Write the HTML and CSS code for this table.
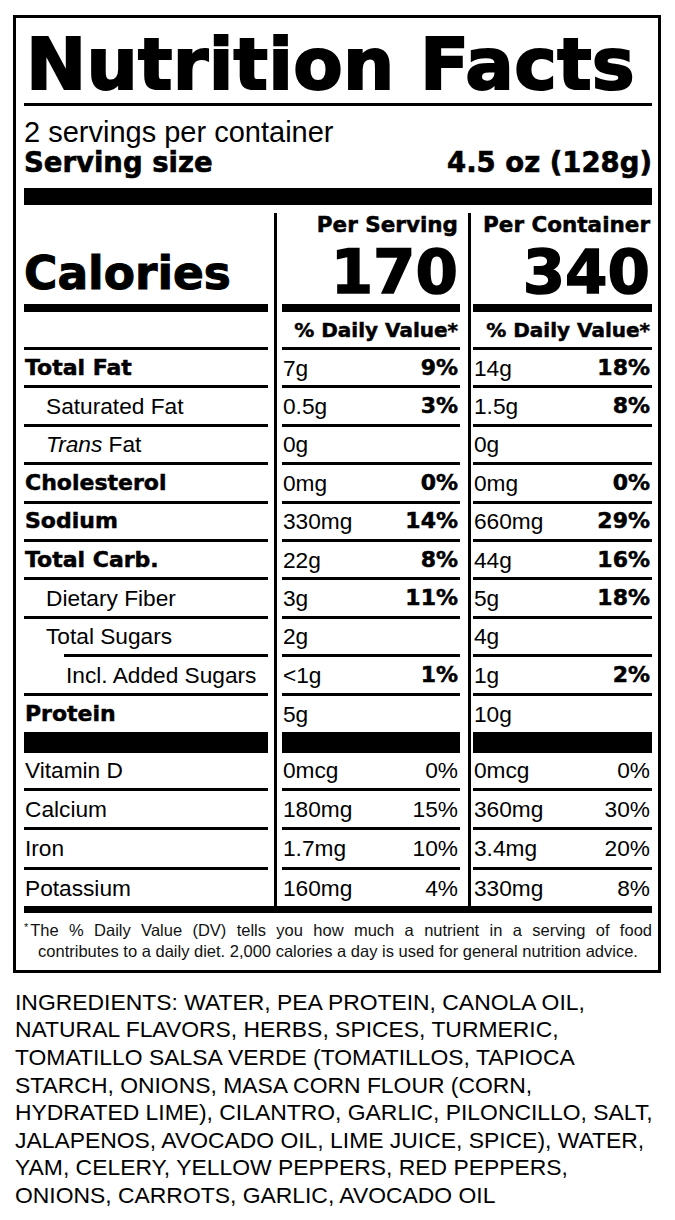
FILE: index.html
```html
<!DOCTYPE html>
<html lang="en">
<head>
<meta charset="utf-8">
<title>Nutrition Facts</title>
<link rel="stylesheet" href="styles.css">
</head>
<body>
<section class="label">
  <h1 class="title">Nutrition Facts</h1>
  <div class="servings">2 servings per container</div>
  <div class="serving-size"><span>Serving size</span><span>4.5 oz (128g)</span></div>
  <div class="bar-thick"></div>

  <div class="facts">
    <div class="vline v1"></div>
    <div class="vline v2"></div>

    <div class="head-label c1">Calories</div>
    <div class="head-val c3"><span class="per">Per Serving</span><span class="num">170</span></div>
    <div class="head-val c5"><span class="per">Per Container</span><span class="num">340</span></div>

    <div class="dv c1"></div>
    <div class="dv c3">% Daily Value*</div>
    <div class="dv c5">% Daily Value*</div>

    <div class="cell c1"><b>Total Fat</b></div>
    <div class="cell c3"><span>7g</span><b>9%</b></div>
    <div class="cell c5"><span>14g</span><b>18%</b></div>

    <div class="cell c1 sub"><span>Saturated Fat</span></div>
    <div class="cell c3"><span>0.5g</span><b>3%</b></div>
    <div class="cell c5"><span>1.5g</span><b>8%</b></div>

    <div class="cell c1 sub"><span><i>Trans</i> Fat</span></div>
    <div class="cell c3"><span>0g</span></div>
    <div class="cell c5"><span>0g</span></div>

    <div class="cell c1"><b>Cholesterol</b></div>
    <div class="cell c3"><span>0mg</span><b>0%</b></div>
    <div class="cell c5"><span>0mg</span><b>0%</b></div>

    <div class="cell c1"><b>Sodium</b></div>
    <div class="cell c3"><span>330mg</span><b>14%</b></div>
    <div class="cell c5"><span>660mg</span><b>29%</b></div>

    <div class="cell c1"><b>Total Carb.</b></div>
    <div class="cell c3"><span>22g</span><b>8%</b></div>
    <div class="cell c5"><span>44g</span><b>16%</b></div>

    <div class="cell c1 sub"><span>Dietary Fiber</span></div>
    <div class="cell c3"><span>3g</span><b>11%</b></div>
    <div class="cell c5"><span>5g</span><b>18%</b></div>

    <div class="cell c1 sub"><span>Total Sugars</span></div>
    <div class="cell c3"><span>2g</span></div>
    <div class="cell c5"><span>4g</span></div>

    <div class="cell c1 sub2"><span>Incl. Added Sugars</span></div>
    <div class="cell c3"><span>&lt;1g</span><b>1%</b></div>
    <div class="cell c5"><span>1g</span><b>2%</b></div>

    <div class="cell c1"><b>Protein</b></div>
    <div class="cell c3"><span>5g</span></div>
    <div class="cell c5"><span>10g</span></div>

    <div class="blackbar c1"></div>
    <div class="blackbar c3"></div>
    <div class="blackbar c5"></div>

    <div class="cell c1 noline"><span>Vitamin D</span></div>
    <div class="cell c3 noline"><span>0mcg</span><span>0%</span></div>
    <div class="cell c5 noline"><span>0mcg</span><span>0%</span></div>

    <div class="cell c1"><span>Calcium</span></div>
    <div class="cell c3"><span>180mg</span><span>15%</span></div>
    <div class="cell c5"><span>360mg</span><span>30%</span></div>

    <div class="cell c1"><span>Iron</span></div>
    <div class="cell c3"><span>1.7mg</span><span>10%</span></div>
    <div class="cell c5"><span>3.4mg</span><span>20%</span></div>

    <div class="cell c1"><span>Potassium</span></div>
    <div class="cell c3"><span>160mg</span><span>4%</span></div>
    <div class="cell c5"><span>330mg</span><span>8%</span></div>
  </div>

  <div class="bar-med"></div>
  <div class="footnote">
    <span class="fn-line1"><span class="ast">*</span>The % Daily Value (DV) tells you how much a nutrient in a serving of food</span>
    <span class="fn-line2">contributes to a daily diet. 2,000 calories a day is used for general nutrition advice.</span>
  </div>
</section>

<p class="ingredients">INGREDIENTS: WATER, PEA PROTEIN, CANOLA OIL,<br>NATURAL FLAVORS, HERBS, SPICES, TURMERIC,<br>TOMATILLO SALSA VERDE (TOMATILLOS, TAPIOCA<br>STARCH, ONIONS, MASA CORN FLOUR (CORN,<br>HYDRATED LIME), CILANTRO, GARLIC, PILONCILLO, SALT,<br>JALAPENOS, AVOCADO OIL, LIME JUICE, SPICE), WATER,<br>YAM, CELERY, YELLOW PEPPERS, RED PEPPERS,<br>ONIONS, CARROTS, GARLIC, AVOCADO OIL</p>
</body>
</html>
```

FILE: styles.css
```css
html, body {
  margin: 0;
  padding: 0;
  background: #fff;
  color: #000;
}

body {
  font-family: "Liberation Sans", Arial, sans-serif;
}

.label {
  box-sizing: border-box;
  width: 648px;
  margin: 15px 0 0 13px;
  border: 3px solid #000;
  padding: 0 6px 8px 8px;
}

.title {
  margin: 0;
  padding-top: 7px;
  padding-left: 2px;
  font-family: "DejaVu Sans", sans-serif;
  font-weight: 700;
  font-size: 72px;
  line-height: 78px;
  letter-spacing: 0.3px;
  white-space: nowrap;
  border-bottom: 3px solid #000;
  -webkit-text-stroke: 2px #000;
}

.servings {
  padding-top: 11px;
  font-size: 29px;
  line-height: 30px;
}

.serving-size {
  display: flex;
  justify-content: space-between;
  font-family: "DejaVu Sans", sans-serif;
  font-weight: 700;
  font-size: 27.5px;
  line-height: 30px;
  -webkit-text-stroke: 0.6px #000;
}

.bar-thick {
  height: 17px;
  margin-top: 11px;
  background: #000;
}

.facts {
  display: grid;
  margin-top: 8px;
  grid-template-columns: 244px 14px 178px 13px 179px;
  grid-template-rows: 99px 35px repeat(9, 38.4px) 39.4px 21px 35px 39.3px 39.3px 39.4px;
}

.vline {
  grid-row: 1 / -1;
  width: 3px;
  background: #000;
}

.v1 { grid-column: 2; margin-left: 6px; }
.v2 { grid-column: 4; margin-left: 8px; }

.c1 { grid-column: 1; }
.c3 { grid-column: 3; }
.c5 { grid-column: 5; }

.head-label {
  display: flex;
  align-items: flex-end;
  padding-bottom: 8px;
  border-bottom: 8px solid #000;
  font-family: "DejaVu Sans", sans-serif;
  font-weight: 700;
  font-size: 45.5px;
  line-height: 44px;
  -webkit-text-stroke: 1px #000;
}

.head-val {
  display: flex;
  flex-direction: column;
  justify-content: space-between;
  align-items: flex-end;
  padding: 1px 2px 4px 0;
  border-bottom: 8px solid #000;
  font-family: "DejaVu Sans", sans-serif;
  font-weight: 700;
}

.per {
  font-size: 21.5px;
  line-height: 22px;
  -webkit-text-stroke: 0.5px #000;
}

.num {
  font-size: 61px;
  line-height: 56px;
  -webkit-text-stroke: 1.5px #000;
}

.dv {
  display: flex;
  align-items: center;
  justify-content: flex-end;
  padding-right: 2px;
  font-family: "DejaVu Sans", sans-serif;
  font-weight: 700;
  font-size: 20px;
  line-height: 24px;
  -webkit-text-stroke: 0.5px #000;
}

.cell {
  display: flex;
  align-items: center;
  justify-content: space-between;
  padding: 0 2px 0 1px;
  border-top: 3px solid #000;
  font-size: 22.7px;
  line-height: 26px;
  white-space: nowrap;
}

.cell b {
  font-family: "DejaVu Sans", sans-serif;
  font-weight: 700;
  font-size: 22px;
  -webkit-text-stroke: 0.5px #000;
}

.cell.sub { padding-left: 22px; }
.cell.sub2 { margin-left: 40px; padding-left: 2px; }
.cell.noline { border-top: 0; }

.blackbar { background: #000; }

.bar-med {
  height: 7px;
  background: #000;
}

.footnote {
  padding-top: 7px;
  font-size: 16.5px;
  line-height: 21px;
  color: #111;
}

.fn-line1 {
  display: block;
  text-align: justify;
  text-align-last: justify;
}

.ast {
  font-size: 11px;
  vertical-align: top;
  line-height: 14px;
  margin-right: 2px;
}

.fn-line2 {
  display: block;
  text-align: center;
}

.ingredients {
  margin: 16px 0 0 15px;
  font-size: 22.9px;
  line-height: 27.6px;
  white-space: nowrap;
}
```
